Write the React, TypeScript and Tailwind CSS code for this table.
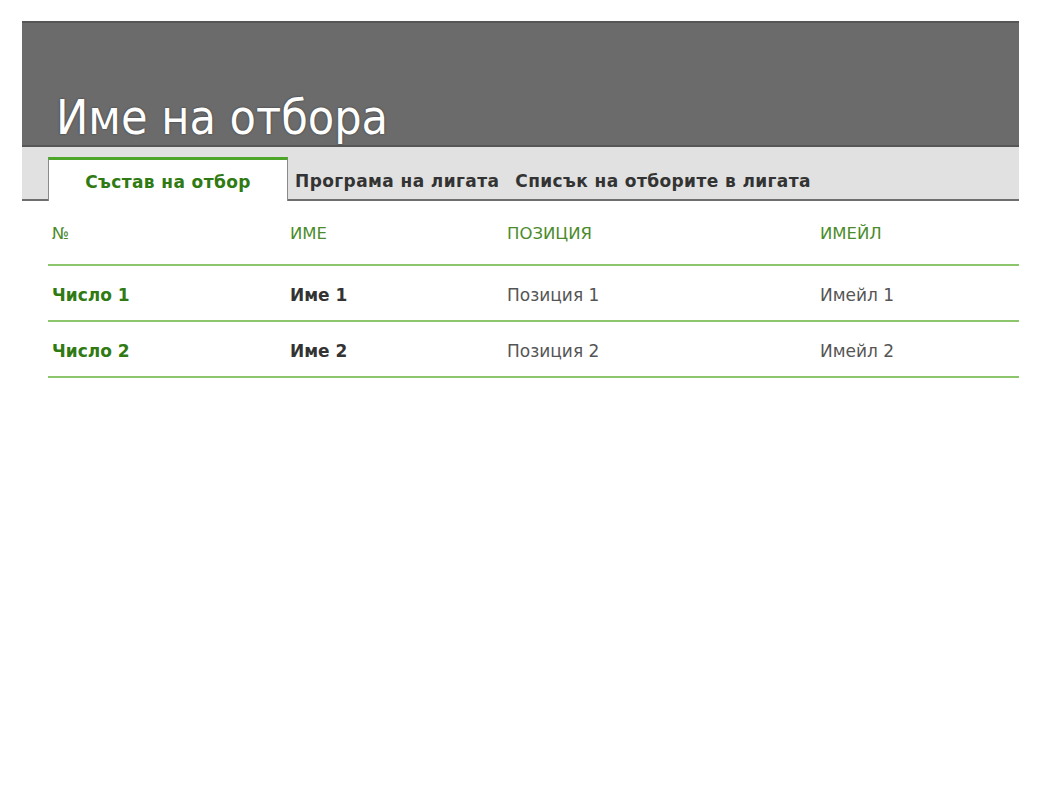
const rows = [
  { num: 'Число 1', name: 'Име 1', pos: 'Позиция 1', email: 'Имейл 1' },
  { num: 'Число 2', name: 'Име 2', pos: 'Позиция 2', email: 'Имейл 2' },
]

const cols = 'grid grid-cols-[238px_217px_313px_1fr]'

export default function App() {
  return (
    <div className="w-[1042px] h-[800px] bg-white pt-[21px] pl-[22px] pr-[23px] font-['DejaVu_Sans',sans-serif]">
      {/* шапка */}
      <div className="h-[126px] bg-[#6b6b6b] border-t-2 border-b-2 border-[#565656] flex items-end pl-[34px] pb-[4px]">
        <h1 className="text-white text-[48px] leading-none font-['DejaVu_Sans_Condensed','DejaVu_Sans',sans-serif] [text-shadow:0_0_2px_#333]">
          Име на отбора
        </h1>
      </div>

      {/* табове */}
      <div className="h-[54px] bg-[#e1e1e1] flex items-end">
        <div className="w-[26px] h-[2px] bg-[#6e6e6e]" />
        <div className="w-[240px] h-[44px] bg-white border-t-[3px] border-[#4da62a] border-x border-x-[#8a8a8a] flex items-center justify-center pt-[4px]">
          <span className="text-[#2f7a12] font-bold text-[17px] tracking-[0.4px]">Състав на отбор</span>
        </div>
        <div className="flex-1 h-full flex flex-col">
          <div className="flex-1 flex items-center gap-[16px] pl-[7px] pt-[18px] text-[17px] tracking-[0.4px] font-bold text-[#333]">
            <span>Програма на лигата</span>
            <span>Списък на отборите в лигата</span>
          </div>
          <div className="h-[2px] bg-[#6e6e6e]" />
        </div>
      </div>

      {/* таблица */}
      <div className="ml-[26px] text-[17px]">
        <div className={`${cols} h-[65px] items-center pl-[4px] pt-[4px] text-[16.5px] text-[#4b8b2b] border-b-2 border-[#8cc56b]`}>
          <span>№</span>
          <span>ИМЕ</span>
          <span>ПОЗИЦИЯ</span>
          <span>ИМЕЙЛ</span>
        </div>
        {rows.map((r) => (
          <div key={r.num} className={`${cols} h-[56px] items-center pl-[4px] pt-[6px] border-b-2 border-[#8cc56b]`}>
            <span className="font-bold text-[#2f7a12]">{r.num}</span>
            <span className="font-bold text-[#333]">{r.name}</span>
            <span className="text-[#555]">{r.pos}</span>
            <span className="text-[#555]">{r.email}</span>
          </div>
        ))}
      </div>
    </div>
  )
}
